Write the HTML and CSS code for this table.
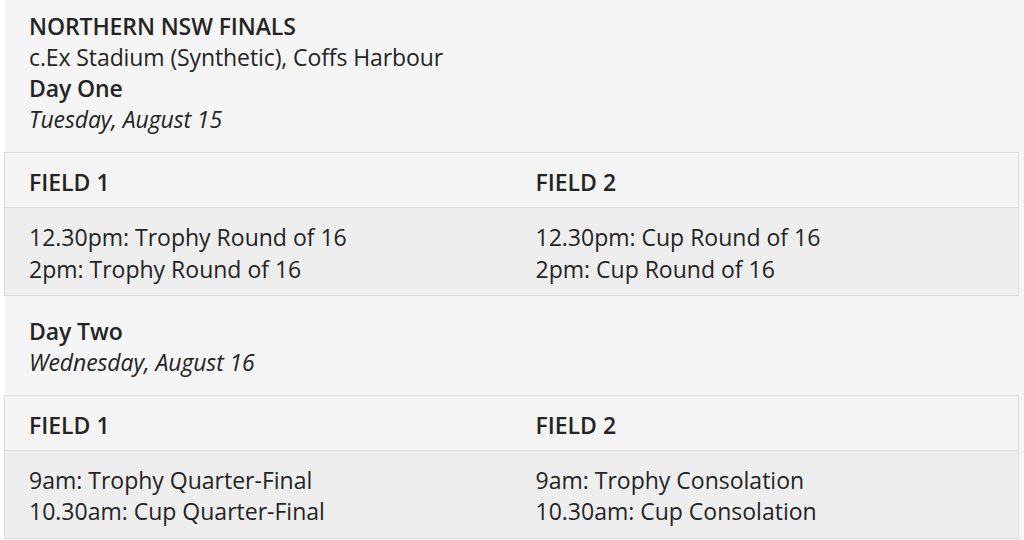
FILE: index.html
```html
<!DOCTYPE html>
<html lang="en">
<head>
<meta charset="utf-8">
<title>Northern NSW Finals</title>
<link rel="stylesheet" href="styles.css">
</head>
<body>
<main class="page">
  <section class="intro intro-first">
    <p class="line strong">NORTHERN NSW FINALS</p>
    <p class="line">c.Ex Stadium (Synthetic), Coffs Harbour</p>
    <p class="line strong">Day One</p>
    <p class="line italic">Tuesday, August 15</p>
  </section>
  <table class="fields">
    <thead>
      <tr><th>FIELD 1</th><th>FIELD 2</th></tr>
    </thead>
    <tbody>
      <tr>
        <td>12.30pm: Trophy Round of 16<br>2pm: Trophy Round of 16</td>
        <td>12.30pm: Cup Round of 16<br>2pm: Cup Round of 16</td>
      </tr>
    </tbody>
  </table>
  <section class="intro">
    <p class="line strong">Day Two</p>
    <p class="line italic">Wednesday, August 16</p>
  </section>
  <table class="fields">
    <thead>
      <tr><th>FIELD 1</th><th>FIELD 2</th></tr>
    </thead>
    <tbody>
      <tr>
        <td>9am: Trophy Quarter-Final<br>10.30am: Cup Quarter-Final</td>
        <td>9am: Trophy Consolation<br>10.30am: Cup Consolation</td>
      </tr>
    </tbody>
  </table>
</main>
</body>
</html>
```

FILE: styles.css
```css
html, body {
  margin: 0;
  padding: 0;
  background: #ffffff;
}

.page {
  margin-left: 5px;
  background: #f5f5f5;
  min-height: 540px;
  padding: 10.5px 0 0 0;
  font-family: "Open Sans", "Noto Sans", sans-serif;
  font-size: 23px;
  line-height: 31.25px;
  color: #242424;
}

.intro {
  padding-left: 24px;
  margin-bottom: 16.5px;
}

.line {
  margin: 0;
  letter-spacing: -0.1px;
}

.strong {
  font-weight: 600;
}

.italic {
  font-style: italic;
}

.fields {
  margin-left: -1px;
  width: 1015px;
  border-collapse: collapse;
  table-layout: fixed;
  margin-bottom: 19.5px;
}

.fields th,
.fields td {
  text-align: left;
  vertical-align: top;
  padding: 14px 24px 9px;
  border: 1px solid #dddddd;
  border-left: none;
  border-right: none;
}

.fields th {
  font-weight: 600;
  background: #f4f4f4;
}

.fields td {
  background: #eeeeee;
  padding-bottom: 10.5px;
}

.fields tr > :first-child {
  border-left: 1px solid #dddddd;
}

.fields tr > :last-child {
  border-right: 1px solid #dddddd;
}
```
